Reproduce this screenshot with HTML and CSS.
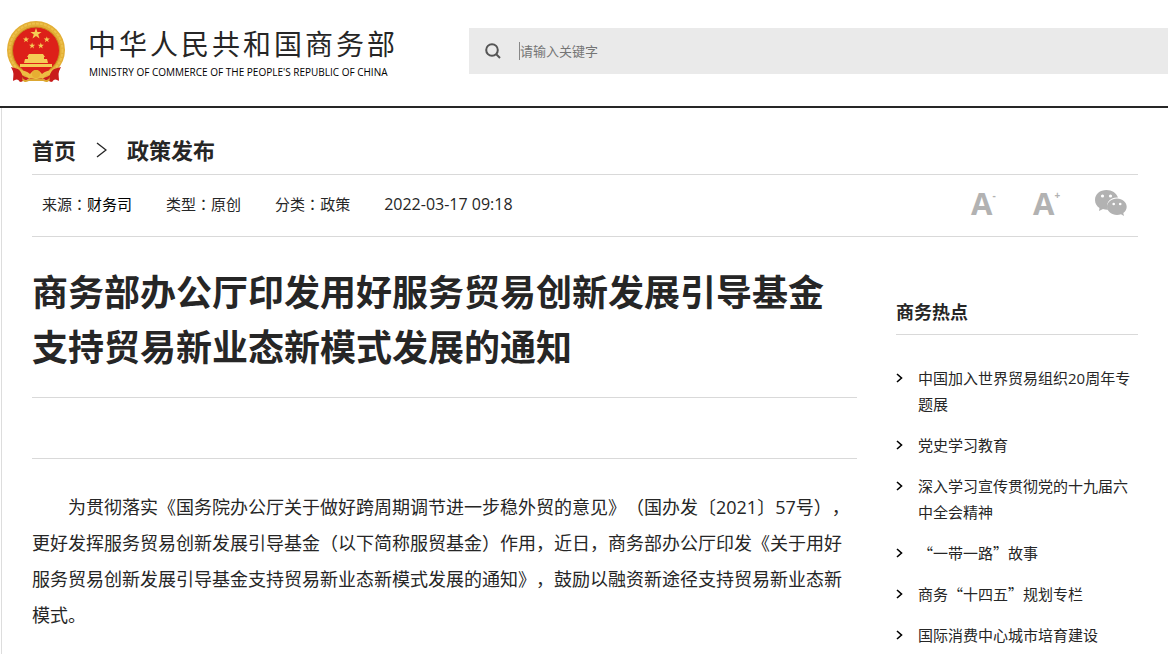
FILE: index.html
```html
<!DOCTYPE html>
<html lang="zh-CN">
<head>
<meta charset="utf-8">
<meta name="viewport" content="width=device-width, initial-scale=1">
<title>中华人民共和国商务部 - 政策发布</title>
<link rel="stylesheet" href="styles.css">
</head>
<body>
<header class="site-header">
  <a class="brand" href="#">
    <svg class="emblem" viewBox="0 0 60 64" aria-hidden="true">
      <path fill="#c81d1c" d="M9 46L7 60Q12 58 14 62Q30 55 46 62Q48 58 53 60L51 46Z"/>
      <circle cx="30" cy="30" r="29" fill="#e3ae35"/>
      <circle cx="30" cy="30" r="26.500" fill="none" stroke="#ecc04a" stroke-width="2" stroke-dasharray="3 1"/>
      <circle cx="30" cy="30.500" r="23.500" fill="#dd2019" stroke="#c98c20" stroke-width="1"/>
      <g fill="#f5cd55">
        <path id="star" d="M30 8l1.400 4h4.200l-3.400 2.500 1.300 4-3.500-2.500-3.500 2.500 1.300-4-3.400-2.500h4.200z"/>
        <use href="#star" transform="translate(3.500 12) scale(.55)"/>
        <use href="#star" transform="translate(24.300 12) scale(.55)"/>
        <use href="#star" transform="translate(9.600 18.200) scale(.55)"/>
        <use href="#star" transform="translate(18.300 18.200) scale(.55)"/>
        <path d="M23 34h14l2 3H21zM22 37h16v2H22zM19 39h22l1 4H18zM14 44h32v3H14z"/>
      </g>
      <path d="M16 48Q30 51 44 48L40 56H20Z" fill="#d9231a"/>
      <path d="M11 50Q20 50 24 54Q27 50 30 50Q33 50 36 54Q40 50 49 50L46 54Q39 55 37 59Q33 56 30 60Q27 56 23 59Q21 55 14 54Z" fill="#edbd43"/>
      <circle cx="30" cy="54" r="4" fill="#e7ae32"/>
      <path d="M15 57Q18 63 23 60H37Q42 63 45 57" fill="none" stroke="#dca731" stroke-width="2"/>
      <path d="M5 47Q9 54 7 61L13 58 16 62Q18 53 12 49Z M55 47Q51 54 53 61L47 58 44 62Q42 53 48 49Z" fill="#c91b1c"/>
    </svg>
    <span class="brand-text">
      <span class="brand-cn">中华人民共和国商务部</span>
      <span class="brand-en">MINISTRY OF COMMERCE OF THE PEOPLE'S REPUBLIC OF CHINA</span>
    </span>
  </a>
  <form class="search">
    <button class="search-button" type="submit" aria-label="搜索">
      <svg class="search-icon" viewBox="0 0 16 16" aria-hidden="true"><circle cx="7" cy="7" r="5.800"/><path d="M11 11l4 4"/></svg>
    </button>
    <input class="search-input" type="text" placeholder="请输入关键字" aria-label="请输入关键字">
  </form>
</header>
<main class="page">
  <nav class="breadcrumb" aria-label="当前位置">
    <a href="#">首页</a>
    <svg class="crumb-arrow" viewBox="0 0 11 18" aria-hidden="true"><path d="M1 2l9 7-9 7"/></svg>
    <a href="#">政策发布</a>
  </nav>
  <div class="meta">
    <span>来源<span class="colon" lang="zh-Hant">：</span><a href="#">财务司</a></span>
    <span>类型<span class="colon" lang="zh-Hant">：</span>原创</span>
    <span>分类<span class="colon" lang="zh-Hant">：</span>政策</span>
    <time class="date" datetime="2022-03-17T09:18">2022-03-17 09:18</time>
    <div class="tools">
      <button class="tool" type="button" aria-label="缩小字号">A<sup>-</sup></button>
      <button class="tool" type="button" aria-label="放大字号">A<sup>+</sup></button>
      <button class="share" type="button" aria-label="微信分享">
        <svg class="wechat" viewBox="0 0 32 28" aria-hidden="true">
          <path d="M11.500 1C5 1 0 5 0 11c0 3.500 1.700 6 4.500 8L4 22l4-2q2 .8 5 .7C10 14 15 8 23 8.500 21.500 4 17 1 11.500 1z"/>
          <path d="M22 9.500c-5.500 0-10 3.700-10 8.300S16.500 26 22 26q2 0 4-.7l3 1.700-.7-3c2.200-1.500 3.400-3.700 3.400-6.200 0-4.600-4.300-8.300-9.700-8.300z"/>
          <g fill="#fff"><circle cx="7.500" cy="7" r="1.600"/><circle cx="15.500" cy="7" r="1.600"/><circle cx="18.700" cy="15" r="1.300"/><circle cx="25.200" cy="15" r="1.300"/></g>
        </svg>
      </button>
    </div>
  </div>
  <div class="columns">
    <article class="article">
      <h1 class="title">商务部办公厅印发用好服务贸易创新发展引导基金支持贸易新业态新模式发展的通知</h1>
      <div class="strip"></div>
      <p class="body-text">为贯彻落实《国务院办公厅关于做好跨周期调节进一步稳外贸的意见》（国办发〔2021〕57号），更好发挥服务贸易创新发展引导基金（以下简称服贸基金）作用，近日，商务部办公厅印发《关于用好服务贸易创新发展引导基金支持贸易新业态新模式发展的通知》，鼓励以融资新途径支持贸易新业态新模式。</p>
    </article>
    <aside class="sidebar">
      <h2 class="side-title">商务热点</h2>
      <ul class="hot-list">
        <li><svg class="bullet" viewBox="0 0 7 10" aria-hidden="true"><path d="M1 1l4.500 4L1 9"/></svg><a href="#">中国加入世界贸易组织20周年专题展</a></li>
        <li><svg class="bullet" viewBox="0 0 7 10" aria-hidden="true"><path d="M1 1l4.500 4L1 9"/></svg><a href="#">党史学习教育</a></li>
        <li><svg class="bullet" viewBox="0 0 7 10" aria-hidden="true"><path d="M1 1l4.500 4L1 9"/></svg><a href="#">深入学习宣传贯彻党的十九届六中全会精神</a></li>
        <li><svg class="bullet" viewBox="0 0 7 10" aria-hidden="true"><path d="M1 1l4.500 4L1 9"/></svg><a class="quoted" href="#">“一带一路”故事</a></li>
        <li><svg class="bullet" viewBox="0 0 7 10" aria-hidden="true"><path d="M1 1l4.500 4L1 9"/></svg><a class="quoted" href="#">商务“十四五”规划专栏</a></li>
        <li><svg class="bullet" viewBox="0 0 7 10" aria-hidden="true"><path d="M1 1l4.500 4L1 9"/></svg><a href="#">国际消费中心城市培育建设</a></li>
      </ul>
    </aside>
  </div>
</main>
</body>
</html>
```

FILE: styles.css
```css
* {
  box-sizing: border-box;
}

body {
  margin: 0;
  background: #fff;
  color: #262626;
  font-family: "Open Sans", "Noto Sans CJK SC", sans-serif;
  font-size: 15px;
  text-spacing-trim: space-all;
}

a {
  color: inherit;
  text-decoration: none;
}

button {
  padding: 0;
  border: 0;
  background: none;
  cursor: pointer;
}

/* Header */
.site-header {
  display: flex;
  align-items: flex-start;
  gap: 71px;
  height: 108px;
  border-bottom: 2px solid #262626;
}

.brand {
  display: flex;
  flex: none;
  gap: 22px;
  padding: 20px 0 0 6px;
}

.emblem {
  width: 60px;
  height: 64px;
}

.brand-text {
  display: flex;
  flex-direction: column;
  padding-top: 5px;
}

.brand-cn {
  font-size: 28px;
  line-height: 38px;
  letter-spacing: 3px;
}

.brand-en {
  padding-left: 1px;
  color: #000;
  font-family: "Open Sans", sans-serif;
  font-size: 10px;
  line-height: 18px;
}

.search {
  display: flex;
  flex: 1;
  align-items: center;
  gap: 18px;
  height: 46px;
  margin-top: 28px;
  padding-left: 16px;
  background: #eaeaea;
}

.search-button {
  display: flex;
}

.search-icon {
  width: 16px;
  height: 16px;
  fill: none;
  stroke: #555;
  stroke-width: 2;
}

.search-input {
  flex: 1;
  min-width: 0;
  height: 18px;
  padding: 0;
  border: 0;
  border-left: 1px solid #888;
  outline: 0;
  background: none;
  font: 13px/18px "Noto Sans CJK SC", sans-serif;
}

.search-input::placeholder {
  color: #757575;
}

/* Page */
.page {
  min-height: calc(100vh - 108px);
  margin-left: 1px;
  padding: 0 30px;
  border-left: 1px solid #ddd;
}

.breadcrumb {
  display: flex;
  align-items: center;
  gap: 20px;
  padding: 25px 0 7px;
  border-bottom: 1px solid #d9d9d9;
  font-size: 22px;
  font-weight: 700;
  line-height: 34px;
}

.crumb-arrow {
  width: 11px;
  height: 18px;
  fill: none;
  stroke: #262626;
  stroke-width: 1.4;
}

.meta {
  display: flex;
  align-items: center;
  gap: 34px;
  height: 62px;
  padding: 0 11px 4px 10px;
  border-bottom: 1px solid #d9d9d9;
}

.meta a {
  color: #000;
}

.colon {
  font-family: "Noto Sans CJK TC", sans-serif;
}

.date {
  font-size: 16px;
}

.tools {
  display: flex;
  align-items: center;
  gap: 36px;
  margin-left: auto;
  padding-bottom: 2px;
}

.tool {
  display: flex;
  align-items: flex-start;
  width: 26px;
  color: #b2b2b2;
  font-family: "Open Sans", sans-serif;
  font-size: 31px;
  font-weight: 700;
  line-height: 36px;
}

.tool sup {
  font-size: 10px;
  line-height: 20px;
}

.share {
  display: flex;
}

.wechat {
  width: 32px;
  height: 28px;
  fill: #b2b2b2;
}

.columns {
  display: grid;
  grid-template-columns: minmax(0, 1fr) 242px;
  gap: 39px;
}

/* Article */
.title {
  margin: 0;
  padding: 28px 0 22px;
  border-bottom: 1px solid #d9d9d9;
  font-size: 36px;
  font-weight: 700;
  line-height: 55px;
}

.strip {
  height: 61px;
  border-bottom: 1px solid #d9d9d9;
}

.body-text {
  margin: 30px 0 0;
  font-size: 18px;
  line-height: 36px;
  text-indent: 2em;
}

/* Sidebar */
.side-title {
  margin: 0;
  padding: 62px 0 9px;
  border-bottom: 1px solid #d9d9d9;
  font-size: 18px;
  line-height: 26px;
}

.hot-list {
  display: flex;
  flex-direction: column;
  gap: 15px;
  margin: 30px 0 0;
  padding: 0;
  list-style: none;
  line-height: 26px;
}

.hot-list li {
  display: flex;
  gap: 15px;
}

.bullet {
  flex: none;
  width: 7px;
  height: 10px;
  margin-top: 8px;
  fill: none;
  stroke: #000;
  stroke-width: 1.6;
}

.quoted {
  font-family: "Noto Sans CJK SC", sans-serif;
}
```
